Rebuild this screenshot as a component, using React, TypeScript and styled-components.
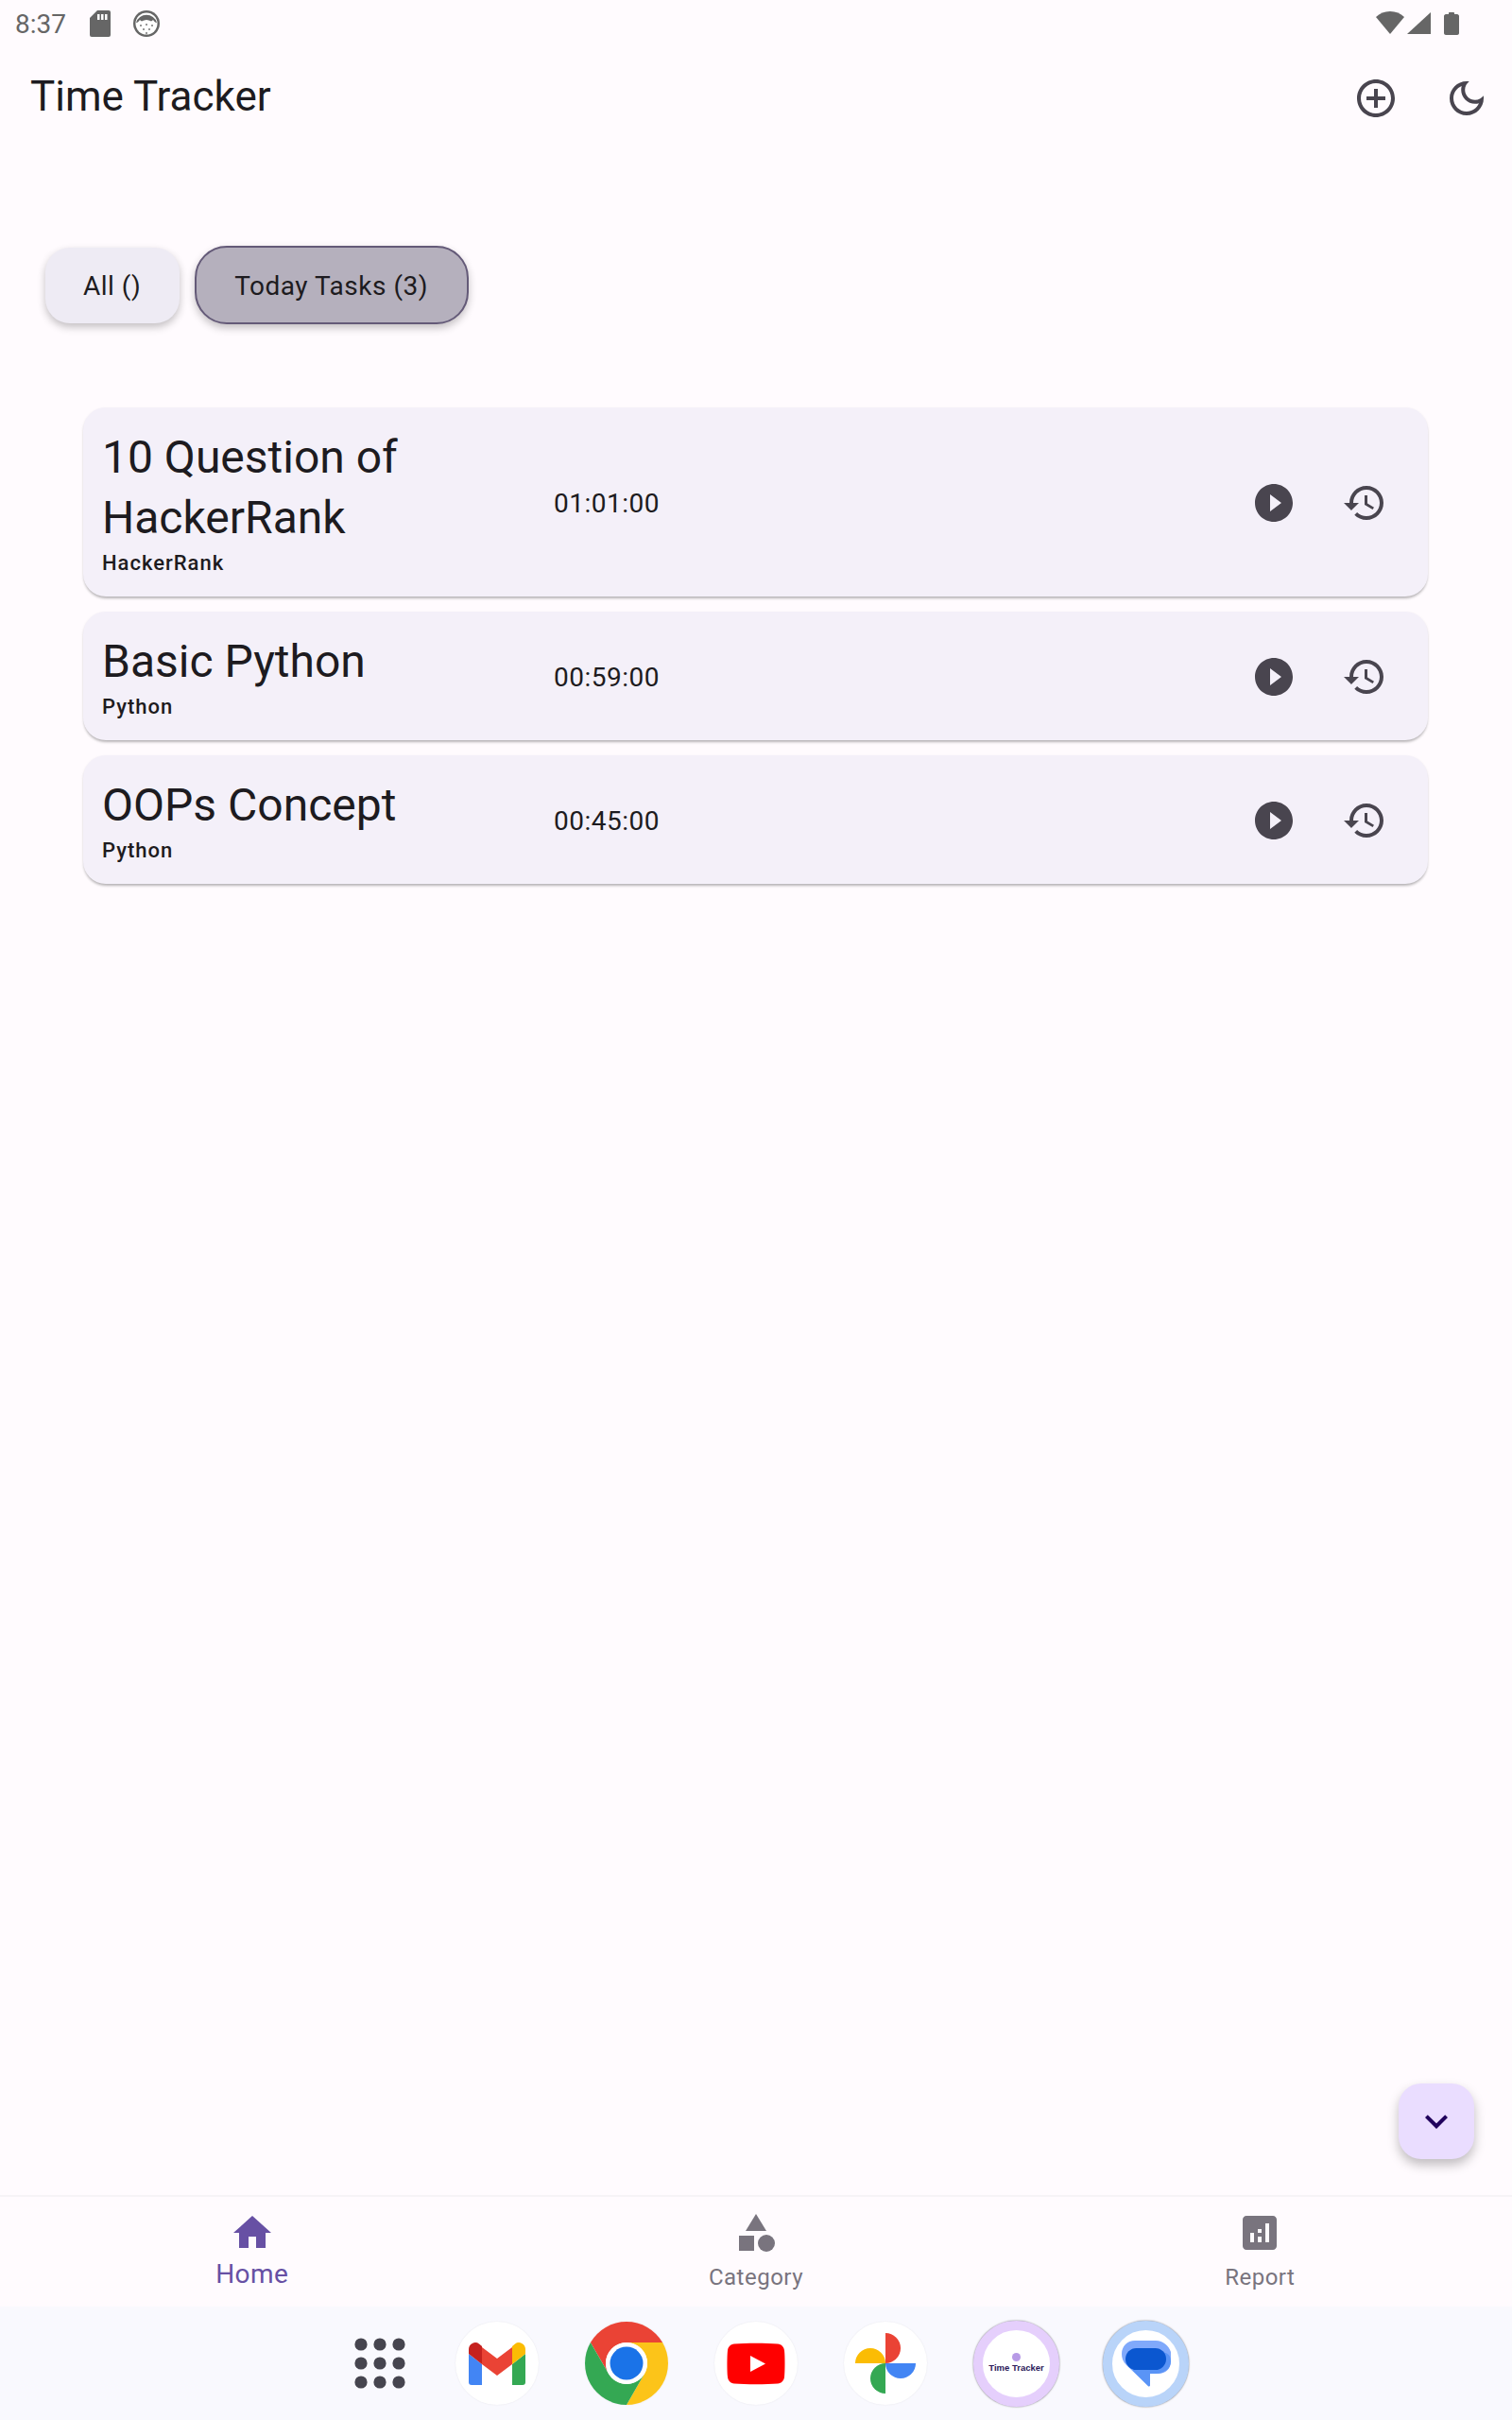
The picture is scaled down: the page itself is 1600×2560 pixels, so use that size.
import styled, { createGlobalStyle } from "styled-components";

const GlobalStyle = createGlobalStyle`
  html, body {
    margin: 0;
    padding: 0;
    background: #fffbfe;
  }
  * {
    box-sizing: border-box;
  }
`;

// Layout
const Page = styled.div`
  width: 1600px;
  height: 2560px;
  display: flex;
  flex-direction: column;
  background: #fffbfe;
  font-family: Roboto, "Liberation Sans", sans-serif;
  color: #1d1b20;
`;

const StatusBar = styled.div`
  height: 48px;
  display: flex;
  align-items: center;
  gap: 24px;
  padding: 2px 56px 0 16px;
  color: #666666;
  font-size: 28px;
`;

const StatusTime = styled.span`
  margin-right: 1px;
`;

const StatusRight = styled.div`
  margin-left: auto;
  display: flex;
  align-items: center;
`;

const AppBar = styled.header`
  height: 112px;
  display: flex;
  align-items: center;
`;

const AppTitle = styled.h1`
  margin: 0 auto 4px 32px;
  font-size: 44px;
  font-weight: 400;
  line-height: 56px;
`;

const IconButton = styled.button`
  width: 96px;
  height: 96px;
  padding: 0;
  border: none;
  background: none;
  display: flex;
  align-items: center;
  justify-content: center;
  color: #49454f;
`;

const Main = styled.main`
  position: relative;
  flex: 1;
`;

const ChipRow = styled.div`
  display: flex;
  align-items: center;
  gap: 16px;
  padding: 100px 0 0 48px;
`;

const Chip = styled.button<{ $selected?: boolean }>`
  height: ${(p) => (p.$selected ? "83px" : "80px")};
  padding: 2px 41px 0 40px;
  border-radius: ${(p) => (p.$selected ? "34px" : "26px")};
  border: ${(p) => (p.$selected ? "2px solid #645a78" : "none")};
  background: ${(p) => (p.$selected ? "#b5b0bd" : "#eeebf4")};
  box-shadow: 0 4px 8px rgba(0, 0, 0, 0.24);
  font-family: inherit;
  font-size: 28px;
  letter-spacing: 0.5px;
  color: #1d1b20;
`;

const TaskList = styled.div`
  display: flex;
  flex-direction: column;
  gap: 16px;
  margin: 88px 89px 0 88px;
`;

const TaskCard = styled.div`
  display: flex;
  align-items: center;
  padding: 21px 19px 19px 20px;
  border-radius: 24px;
  background: #f4f0f9;
  box-shadow: 0 3px 3px -1px rgba(0, 0, 0, 0.25), 0 1px 3px rgba(0, 0, 0, 0.08);
`;

const TaskInfo = styled.div`
  width: 478px;
`;

const TaskTitle = styled.div`
  font-size: 48px;
  line-height: 64px;
`;

const TaskCategory = styled.div`
  font-size: 22px;
  line-height: 32px;
  font-weight: 500;
  letter-spacing: 1px;
`;

const TaskTime = styled.div`
  font-size: 28px;
  letter-spacing: 0.5px;
`;

const TaskActions = styled.div`
  margin-left: auto;
  display: flex;
  color: #49454f;
`;

const ActionButton = styled.div`
  width: 96px;
  display: flex;
  align-items: center;
  justify-content: center;
`;

const Fab = styled.button`
  position: absolute;
  right: 40px;
  bottom: 38px;
  width: 80px;
  height: 80px;
  padding: 0;
  border: none;
  border-radius: 24px;
  background: #eaddff;
  box-shadow: 0 6px 12px rgba(0, 0, 0, 0.25);
  color: #21005d;
  display: flex;
  align-items: center;
  justify-content: center;
`;

const BottomNav = styled.nav`
  height: 118px;
  display: grid;
  grid-template-columns: repeat(3, 1fr);
  border-top: 2px solid #f6f3f6;
`;

const NavItem = styled.div<{ $active?: boolean }>`
  display: flex;
  flex-direction: column;
  align-items: center;
  padding-top: 14px;
  color: ${(p) => (p.$active ? "#6750a4" : "#79747e")};
`;

const NavLabel = styled.span<{ $active?: boolean }>`
  font-size: ${(p) => (p.$active ? "28px" : "24px")};
  letter-spacing: ${(p) => (p.$active ? "0.4px" : "0.5px")};
  line-height: 32px;
  margin-top: ${(p) => (p.$active ? "4px" : "7px")};
`;

const Dock = styled.div`
  height: 120px;
  display: flex;
  align-items: center;
  padding-left: 375px;
  background: #f9f9fe;
`;

const DockGrid = styled.div`
  display: flex;
  margin-right: 53px;
  color: #46454f;
`;

const DockIcon = styled.div`
  width: 88px;
  height: 88px;
  margin-right: 49px;
  border-radius: 50%;
  background: #ffffff;
  box-shadow: 0 0 2px rgba(0, 0, 0, 0.08);
  display: flex;
`;

const RingIcon = styled.div<{ $ring: string }>`
  width: 91px;
  height: 91px;
  margin: 0 46px 0 0;
  border-radius: 50%;
  border: 10px solid ${(p) => p.$ring};
  background: #ffffff;
  box-shadow: 0 0 2px rgba(0, 0, 0, 0.55);
  display: flex;
  flex-direction: column;
  align-items: center;
  justify-content: center;
`;

const TrackerDot = styled.div`
  width: 9px;
  height: 9px;
  border-radius: 50%;
  background: #b79ae6;
  margin-top: -2px;
`;

const TrackerLabel = styled.div`
  font-family: "Liberation Sans", sans-serif;
  font-size: 9.5px;
  font-weight: 700;
  line-height: 11px;
  margin-top: 1px;
  color: #2c1a5a;
  white-space: nowrap;
`;

// Icons
const Mi = ({ d, size = 48 }: { d: string; size?: number }) => (
  <svg width={size} height={size} viewBox="0 0 24 24" fill="currentColor">
    <path d={d} />
  </svg>
);

const ADD_CIRCLE =
  "M13 7h-2v4H7v2h4v4h2v-4h4v-2h-4V7zm-1-5C6.48 2 2 6.48 2 12s4.48 10 10 10 10-4.48 10-10S17.52 2 12 2zm0 18c-4.41 0-8-3.59-8-8s3.59-8 8-8 8 3.59 8 8-3.59 8-8 8z";
const MOON =
  "M9.37 5.51c-.18.64-.27 1.31-.27 1.99 0 4.08 3.32 7.4 7.4 7.4.68 0 1.35-.09 1.99-.27C17.45 17.19 14.93 19 12 19c-3.86 0-7-3.14-7-7 0-2.93 1.81-5.45 4.37-6.49zM12 3c-4.97 0-9 4.03-9 9s4.03 9 9 9 9-4.03 9-9c0-.46-.04-.92-.1-1.36-.98 1.37-2.58 2.26-4.4 2.26-2.98 0-5.4-2.42-5.4-5.4 0-1.81.89-3.42 2.26-4.4-.44-.06-.9-.1-1.36-.1z";
const PLAY =
  "M12 2C6.48 2 2 6.48 2 12s4.48 10 10 10 10-4.48 10-10S17.52 2 12 2zm-2 14.5v-9l6 4.5-6 4.5z";
const HISTORY =
  "M13 3c-4.97 0-9 4.03-9 9H1l3.89 3.89.07.14L9 12H6c0-3.87 3.13-7 7-7s7 3.13 7 7-3.13 7-7 7c-1.93 0-3.68-.79-4.94-2.06l-1.42 1.42C8.27 19.99 10.51 21 13 21c4.97 0 9-4.03 9-9s-4.03-9-9-9zm-1 5v5l4.28 2.54.72-1.21-3.5-2.08V8H12z";
const HOME = "M10 20v-6h4v6h5v-8h3L12 3 2 12h3v8z";
const REPORT =
  "M19 3H5c-1.1 0-2 .9-2 2v14c0 1.1.9 2 2 2h14c1.1 0 2-.9 2-2V5c0-1.1-.9-2-2-2zM9 17H7v-5h2v5zm4 0h-2v-3h2v3zm0-5h-2v-2h2v2zm4 5h-2V7h2v10z";
const CHEVRON = "M7.41 8.59L12 13.17l4.59-4.58L18 10l-6 6-6-6 1.41-1.41z";

const CategoryIcon = () => (
  <svg width={48} height={48} viewBox="0 0 24 24" fill="currentColor">
    <path d="M12 2l-5.5 9h11z" />
    <circle cx="17.5" cy="17.5" r="4.5" />
    <rect x="3" y="13.5" width="8" height="8" />
  </svg>
);

const SdIcon = () => (
  <svg width={22} height={28} viewBox="0 0 22 28">
    <path
      d="M8 0h12a2 2 0 0 1 2 2v24a2 2 0 0 1-2 2H2a2 2 0 0 1-2-2V8z"
      fill="#666666"
    />
    <path d="M8 4h2.5v6H8zM12 4h2.5v6H12zM16 4h2.5v6H16z" fill="#ffffff" />
  </svg>
);

const FaceIcon = () => (
  <svg width={28} height={28} viewBox="0 0 28 28">
    <circle cx="14" cy="14" r="14" fill="#666666" />
    <circle cx="14" cy="14" r="11.5" fill="#ffffff" />
    <path
      d="M3 13A11.5 11.5 0 0 1 25 13c-2 0-3-2-4-3-1 1-2 2-3 1-1 0-2-1-4-1s-3 1-4 1c-1 1-2 0-3-1-1 1-2 3-4 3z"
      fill="#666666"
    />
    <g fill="#777777">
      <circle cx="8" cy="16" r="1" />
      <circle cx="14" cy="15" r="1" />
      <circle cx="20" cy="16" r="1" />
      <circle cx="11" cy="20" r="1" />
      <circle cx="17" cy="20" r="1" />
      <circle cx="14" cy="24" r="1" />
    </g>
  </svg>
);

const SystemIcons = () => (
  <svg width={88} height={28} viewBox="0 0 88 28">
    <path d="M0 7C4 3 9 1 15 1s11 2 15 6L15 25z" fill="#666666" />
    <path d="M33 25L58 2v23z" fill="#666666" />
    <path
      d="M77 3c0-.6.4-1 1-1h4c.6 0 1 .4 1 1v1h3c1 0 2 1 2 2v18c0 1-1 2-2 2H74c-1 0-2-1-2-2V6c0-1 1-2 2-2h3z"
      fill="#666666"
    />
  </svg>
);

const LauncherDots = () => (
  <svg width={54} height={54} viewBox="0 0 54 54" fill="currentColor">
    {[7, 27, 47].map((cy) =>
      [7, 27, 47].map((cx) => <circle key={`${cx}-${cy}`} cx={cx} cy={cy} r="6.6" />)
    )}
  </svg>
);

const GmailIcon = () => (
  <svg width={88} height={88} viewBox="0 0 88 88">
    <path d="M14 34l14 11v22H17a3 3 0 0 1-3-3z" fill="#4285f4" />
    <path d="M60 45l14-11v30a3 3 0 0 1-3 3H60z" fill="#34a853" />
    <path d="M28 27l16 12 16-12v18L44 57 28 45z" fill="#ea4335" />
    <path d="M14 29a7 7 0 0 1 11-5.6l3 2.6v19L14 34z" fill="#c5221f" />
    <path d="M60 26l3-2.6A7 7 0 0 1 74 29v5L60 45z" fill="#fbbc04" />
  </svg>
);

const ChromeIcon = () => (
  <svg width={88} height={88} viewBox="0 0 88 88">
    <path d="M44 22h38.1A44 44 0 0 0 5.9 22L25 55a22 22 0 0 1 19-33z" fill="#ea4335" />
    <path d="M44 22h38.1A44 44 0 0 1 44 88l19-33a22 22 0 0 0-19-33z" fill="#fcc419" />
    <path d="M5.9 22A44 44 0 0 0 44 88l19-33a22 22 0 0 1-38 0z" fill="#34a853" />
    <circle cx="44" cy="44" r="22" fill="#ffffff" />
    <circle cx="44" cy="44" r="17.5" fill="#1a73e8" />
  </svg>
);

const YoutubeIcon = () => (
  <svg width={88} height={88} viewBox="0 0 88 88">
    <path
      d="M21 23.5c12-1 34-1 46 0 4 .4 6.5 3 7 7 .7 5 .7 23 0 28-.5 4-3 6.6-7 7-12 1-34 1-46 0-4-.4-6.5-3-7-7-.7-5-.7-23 0-28 .5-4 3-6.6 7-7z"
      fill="#ff0000"
    />
    <path d="M38 36l16 8.5-16 8.5z" fill="#ffffff" />
  </svg>
);

const PhotosIcon = () => (
  <svg width={88} height={88} viewBox="0 0 88 88">
    <path d="M44 12a16 16 0 0 1 0 32z" fill="#ea4335" />
    <path d="M76 44a16 16 0 0 1-32 0z" fill="#4285f4" />
    <path d="M44 76a16 16 0 0 1 0-32z" fill="#34a853" />
    <path d="M12 44a16 16 0 0 1 32 0z" fill="#fbbc04" />
  </svg>
);

const MessagesIcon = () => (
  <svg width={52} height={50} viewBox="0 0 52 50">
    <path
      d="M14 1h22c8 0 14 6 16 12v10c0 8-6 13-13 13h-9v12c0 1-1 2-2 1L5 27C1 23 0 19 0 15 0 7 6 1 14 1z"
      fill="#80a9fb"
    />
    <path d="M36 36h-6v12c0 1-1 2-2 1L12 33c-2-2 22-20 24-20 8 0 16 0 16 10 0 8-8 13-16 13z" fill="#5a94f6" />
    <rect x="4" y="9" width="43" height="23" rx="11.5" fill="#0b57d0" />
  </svg>
);

const tasks = [
  { title: "10 Question of HackerRank", category: "HackerRank", time: "01:01:00" },
  { title: "Basic Python", category: "Python", time: "00:59:00" },
  { title: "OOPs Concept", category: "Python", time: "00:45:00" },
];

export default function App() {
  return (
    <Page>
      <GlobalStyle />
      <StatusBar>
        <StatusTime>8:37</StatusTime>
        <SdIcon />
        <FaceIcon />
        <StatusRight>
          <SystemIcons />
        </StatusRight>
      </StatusBar>

      <AppBar>
        <AppTitle>Time Tracker</AppTitle>
        <IconButton>
          <Mi d={ADD_CIRCLE} />
        </IconButton>
        <IconButton>
          <Mi d={MOON} />
        </IconButton>
      </AppBar>

      <Main>
        <ChipRow>
          <Chip>All ()</Chip>
          <Chip $selected>Today Tasks (3)</Chip>
        </ChipRow>

        <TaskList>
          {tasks.map((task) => (
            <TaskCard key={task.title}>
              <TaskInfo>
                <TaskTitle>{task.title}</TaskTitle>
                <TaskCategory>{task.category}</TaskCategory>
              </TaskInfo>
              <TaskTime>{task.time}</TaskTime>
              <TaskActions>
                <ActionButton>
                  <Mi d={PLAY} />
                </ActionButton>
                <ActionButton>
                  <Mi d={HISTORY} />
                </ActionButton>
              </TaskActions>
            </TaskCard>
          ))}
        </TaskList>

        <Fab>
          <Mi d={CHEVRON} />
        </Fab>
      </Main>

      <BottomNav>
        <NavItem $active>
          <Mi d={HOME} />
          <NavLabel $active>Home</NavLabel>
        </NavItem>
        <NavItem>
          <CategoryIcon />
          <NavLabel>Category</NavLabel>
        </NavItem>
        <NavItem>
          <Mi d={REPORT} />
          <NavLabel>Report</NavLabel>
        </NavItem>
      </BottomNav>

      <Dock>
        <DockGrid>
          <LauncherDots />
        </DockGrid>
        <DockIcon>
          <GmailIcon />
        </DockIcon>
        <DockIcon>
          <ChromeIcon />
        </DockIcon>
        <DockIcon>
          <YoutubeIcon />
        </DockIcon>
        <DockIcon>
          <PhotosIcon />
        </DockIcon>
        <RingIcon $ring="#e5cffc">
          <TrackerDot />
          <TrackerLabel>Time Tracker</TrackerLabel>
        </RingIcon>
        <RingIcon $ring="#b9d4f9">
          <MessagesIcon />
        </RingIcon>
      </Dock>
    </Page>
  );
}
